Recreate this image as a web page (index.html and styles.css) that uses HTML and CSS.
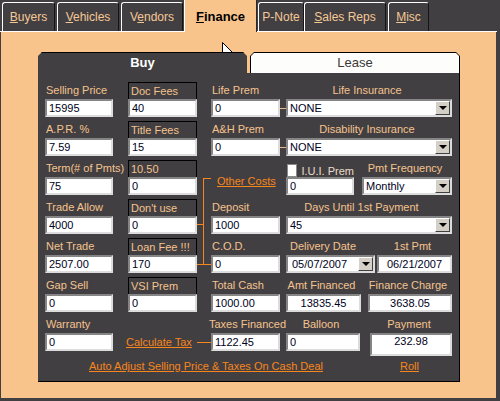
FILE: index.html
```html
<!DOCTYPE html>
<html lang="en">
  <head>
    <meta charset="UTF-8" />
    <title>Finance</title>
    <link rel="stylesheet" href="styles.css">
  </head>
  <body>
    <!-- Top tabs -->
    <div class="tabbar">
      <a href="#" class="tab t-buyers"><u>B</u>uyers</a>
      <a href="#" class="tab t-vehicles"><u>V</u>ehicles</a>
      <a href="#" class="tab t-vendors">V<u>e</u>ndors</a>
      <a href="#" class="tab t-finance active"><u>F</u>inance</a>
      <a href="#" class="tab t-pnote">P-Note</a>
      <a href="#" class="tab t-sales"><u>S</u>ales Reps</a>
      <a href="#" class="tab t-misc"><u>M</u>isc</a>
    </div>

    <div class="page">
      <!-- mouse pointer -->
      <svg class="cursor" width="13" height="21" viewBox="0 0 13 21">
        <path d="M0.5 0.5 L0.5 16.5 L4.5 12.5 L7.5 19.5 L9.5 18.5 L6.5 11.5 L11.5 11.5 Z" fill="#fff" stroke="#000" />
      </svg>

      <div class="panel">
        <div class="panel-tabs">
          <div class="buy">Buy</div>
          <div class="lease"><div class="lease-face">Lease</div></div>
        </div>

        <div class="panel-body">
          <div class="grid">
            <!-- connector lines -->
            <span class="wire wire-ins r1"></span>
            <span class="wire wire-ins r2"></span>
            <span class="bracket"></span>
            <span class="wire wire-cost tick-use"></span>
            <span class="wire wire-cost tick-loan"></span>
            <span class="wire wire-cost tick-tax"></span>

            <!-- row 1 -->
            <div class="field c1"><label>Selling Price</label><input value="15995"></div>
            <div class="field c2 boxed"><label>Doc Fees</label><input value="40"></div>
            <div class="field c3"><label>Life Prem</label><input value="0"></div>
            <div class="field c4">
              <label class="center">Life Insurance</label>
              <div class="select"><span>NONE</span><i class="drop"></i></div>
            </div>

            <!-- row 2 -->
            <div class="field c1"><label>A.P.R. %</label><input value="7.59"></div>
            <div class="field c2 boxed"><label>Title Fees</label><input value="15"></div>
            <div class="field c3"><label>A&amp;H Prem</label><input value="0"></div>
            <div class="field c4">
              <label class="center">Disability Insurance</label>
              <div class="select"><span>NONE</span><i class="drop"></i></div>
            </div>

            <!-- row 3 -->
            <div class="field c1"><label>Term(# of Pmts)</label><input value="75"></div>
            <div class="field c2 boxed"><label>10.50</label><input value="0"></div>
            <div class="field c3"><a href="#" class="other-costs">Other Costs</a></div>
            <div class="field c4 split">
              <div class="sub w68">
                <label class="check"><span class="box"></span>I.U.I. Prem</label>
                <input value="0">
              </div>
              <div class="sub w90">
                <label class="center">Pmt Frequency</label>
                <div class="select"><span>Monthly</span><i class="drop"></i></div>
              </div>
            </div>

            <!-- row 4 -->
            <div class="field c1"><label>Trade Allow</label><input value="4000"></div>
            <div class="field c2 boxed"><label>Don't use</label><input value="0"></div>
            <div class="field c3"><label>Deposit</label><input value="1000"></div>
            <div class="field c4">
              <label class="center shift">Days Until 1st Payment</label>
              <div class="select"><span>45</span><i class="drop"></i></div>
            </div>

            <!-- row 5 -->
            <div class="field c1"><label>Net Trade</label><input value="2507.00"></div>
            <div class="field c2 boxed"><label>Loan Fee !!!</label><input value="170"></div>
            <div class="field c3"><label>C.O.D.</label><input value="0"></div>
            <div class="field c4 split">
              <div class="sub w89">
                <label class="center shift">Delivery Date</label>
                <div class="select date"><span>05/07/2007</span><i class="drop"></i></div>
              </div>
              <div class="sub w75">
                <label class="center">1st Pmt</label>
                <input class="mid" value="06/21/2007">
              </div>
            </div>

            <!-- row 6 -->
            <div class="field c1"><label>Gap Sell</label><input value="0"></div>
            <div class="field c2 boxed"><label>VSI Prem</label><input value="0"></div>
            <div class="field c3"><label>Total Cash</label><input value="1000.00"></div>
            <div class="field c4 split">
              <div class="sub w75">
                <label class="center">Amt Financed</label>
                <input class="mid" value="13835.45">
              </div>
              <div class="sub w84">
                <label class="center">Finance Charge</label>
                <input class="mid" value="3638.05">
              </div>
            </div>

            <!-- row 7 -->
            <div class="field c1"><label>Warranty</label><input value="0"></div>
            <div class="field c2"><a href="#" class="calc-tax">Calculate Tax</a></div>
            <div class="field c3"><label class="pull">Taxes Financed</label><input value="1122.45"></div>
            <div class="field c4 split">
              <div class="sub w74">
                <label class="center">Balloon</label>
                <input value="0">
              </div>
              <div class="sub w82">
                <label class="center">Payment</label>
                <input class="mid tall" value="232.98">
              </div>
            </div>
          </div>

          <div class="bottom-links">
            <a href="#">Auto Adjust Selling Price &amp; Taxes On Cash Deal</a>
            <a href="#" class="roll">Roll</a>
          </div>
        </div>
      </div>
    </div>
  </body>
</html>
```

FILE: styles.css
```css
/* General */
body {
  margin: 0;
  background-color: #423f42;
  font-family: "Liberation Sans", Arial, sans-serif;
  font-size: 11px;
  overflow: hidden;
}

/* Top tab strip */
.tabbar {
  display: flex;
  height: 32px;
  background: linear-gradient(#fff, #fff) left bottom / 497px 1px no-repeat, #423f42;
}

.tab {
  display: block;
  box-sizing: border-box;
  height: 29px;
  margin-top: 2px;
  margin-left: 2px;
  border: 1px solid #fff;
  border-bottom: none;
  border-right-color: #151515;
  border-radius: 3px 3px 0 0;
  color: #f5c995;
  font-size: 12px;
  line-height: 28px;
  text-align: center;
  text-decoration: none;
}

.tab u {
  text-decoration-thickness: 1px;
}

.t-buyers { width: 53px; }
.t-vehicles { width: 62px; }
.t-vendors { width: 62px; }
.t-pnote { width: 46px; margin-left: 1px; }
.t-sales { width: 82px; margin-left: 0; }
.t-misc { width: 41px; }

.tab.active {
  width: 73px;
  height: 32px;
  margin-top: 0;
  margin-left: 1px;
  border-top: none;
  border-radius: 0;
  border-right-color: #2a2a2a;
  background-color: #f9c48c;
  color: #000;
  font-size: 13px;
  font-weight: bold;
  padding-top: 2px;
  line-height: 30px;
}

/* Peach work area */
.page {
  position: relative;
  box-sizing: border-box;
  height: 366px;
  margin: 0 4px 0 1px;
  padding: 20px 0 0 37px;
  background-color: #f9c48c;
}

.cursor {
  position: absolute;
  left: 221px;
  top: 10px;
}

/* Buy / Lease panel */
.panel-tabs {
  display: flex;
  height: 21px;
}

.buy {
  box-sizing: border-box;
  width: 209px;
  border-top: 1px solid #000;
  background-color: #423f42;
  color: #fff;
  font-size: 13px;
  font-weight: bold;
  line-height: 20px;
  text-align: center;
  clip-path: polygon(4px 0, calc(100% - 4px) 0, 100% 4px, 100% 100%, 0 100%, 0 4px);
}

.lease {
  box-sizing: border-box;
  width: 210px;
  margin-left: 3px;
  padding: 1px 1px 0;
  background-color: #000;
  clip-path: polygon(4px 0, calc(100% - 4px) 0, 100% 4px, 100% 100%, 0 100%, 0 4px);
}

.lease-face {
  height: 20px;
  background-color: #fdfdfb;
  color: #3a3a3a;
  font-size: 13px;
  line-height: 20px;
  text-align: center;
  clip-path: polygon(3px 0, calc(100% - 3px) 0, 100% 3px, 100% 100%, 0 100%, 0 3px);
}

.panel-body {
  box-sizing: border-box;
  width: 422px;
  height: 309px;
  padding: 9px 0 0 7px;
  background-color: #423f42;
  border-right: 1px solid #000;
  border-bottom: 1px solid #000;
}

/* Form grid */
.grid {
  display: grid;
  grid-template-columns: 68px 15px 69px 14px 69px 6px 166px;
  grid-template-rows: repeat(7, 39px);
}

.c1 { grid-column: 1; }
.c2 { grid-column: 3; }
.c3 { grid-column: 5; }
.c4 { grid-column: 7; }
.r1 { grid-row: 1; }
.r2 { grid-row: 2; }

.field,
.sub {
  display: flex;
  flex-direction: column;
}

.field label,
.sub label {
  height: 17px;
  padding-left: 1px;
  color: #f5c38e;
  line-height: 17px;
  white-space: nowrap;
}

.boxed label {
  box-sizing: border-box;
  border: 1px solid #000;
  border-bottom: none;
  padding-left: 2px;
  line-height: 16px;
}

.field label.center,
.sub label.center {
  padding-left: 0;
  padding-right: 4px;
  text-align: center;
}

.field label.shift,
.sub label.shift {
  padding-right: 15px;
}

.field label.pull {
  margin-left: -3px;
}

.split {
  flex-direction: row;
  justify-content: space-between;
}

.w68 { width: 68px; }
.w74 { width: 74px; }
.w75 { width: 75px; }
.w82 { width: 82px; }
.w84 { width: 84px; }
.w89 { width: 89px; }
.w90 { width: 90px; }

.sub label.check {
  display: flex;
  height: 17px;
  padding-top: 4px;
  box-sizing: border-box;
  color: #ecdcc8;
  line-height: 14px;
}

.check .box {
  box-sizing: border-box;
  width: 13px;
  height: 13px;
  margin-right: 4px;
  background-color: #fff;
  border: 1px solid #8a8a8a;
}

/* Inputs */
input {
  box-sizing: border-box;
  width: 100%;
  height: 18px;
  margin: 0;
  padding: 0 2px;
  border: 2px solid;
  border-color: #858585 #dcdcdc #dcdcdc #858585;
  background-color: #fff;
  color: #000022;
  font: 11px "Liberation Sans", Arial, sans-serif;
  outline: none;
}

input.mid {
  text-align: center;
}

input.tall {
  height: 26px;
  padding-bottom: 7px;
}

.select {
  display: flex;
  box-sizing: border-box;
  height: 18px;
  border: 2px solid;
  border-color: #858585 #dcdcdc #dcdcdc #858585;
  background-color: #fff;
  color: #000022;
}

.select span {
  flex: 1;
  padding-left: 2px;
  line-height: 14px;
}

.select.date span {
  padding-left: 4px;
}

.drop {
  display: flex;
  align-items: center;
  justify-content: center;
  box-sizing: border-box;
  width: 15px;
  height: 14px;
  background-color: #d4d0c8;
  border: 1px solid;
  border-color: #fff #404040 #404040 #fff;
}

.drop::after {
  content: "";
  border-left: 4px solid transparent;
  border-right: 4px solid transparent;
  border-top: 4px solid #000;
}

/* Connector lines */
.wire {
  height: 1px;
  align-self: start;
}

.wire-ins {
  grid-column: 6;
  margin-top: 26px;
  background-color: #e9b985;
}

.wire-cost {
  grid-column: 4;
  background-color: #f7861c;
}

.tick-use { grid-row: 4; margin-top: 25px; width: 6px; }
.tick-loan { grid-row: 5; margin-top: 26px; width: 6px; }
.tick-tax { grid-row: 7; margin-top: 26px; width: 14px; }

.bracket {
  grid-column: 4;
  grid-row: 3 / 6;
  align-self: start;
  box-sizing: border-box;
  height: 87px;
  margin: 18px 0 0 6px;
  border: 1px solid #f7861c;
  border-right: none;
}

/* Links */
a {
  color: #f7861c;
}

.other-costs {
  display: block;
  margin: 15px 0 0 6px;
  line-height: 13px;
}

.calc-tax {
  display: block;
  margin: 20px 0 0 -2px;
  line-height: 13px;
  white-space: nowrap;
}

.bottom-links {
  display: flex;
  margin-top: 5px;
  padding: 0 40px 0 44px;
  line-height: 13px;
}

.roll {
  margin-left: auto;
}
```
